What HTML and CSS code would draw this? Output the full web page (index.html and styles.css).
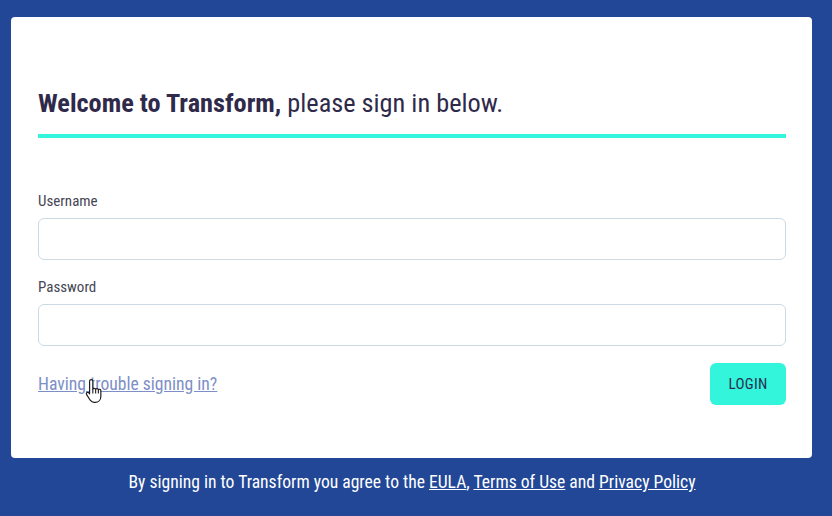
FILE: index.html
```html
<!DOCTYPE html>
<html lang="en">
<head>
<meta charset="utf-8">
<title>Sign in - Transform</title>
<link rel="stylesheet" href="styles.css">
</head>
<body>
<main class="page">
  <section class="card">
    <h1 class="title"><strong>Welcome to Transform,</strong> please sign in below.</h1>
    <form class="form">
      <label class="field">
        <span class="label">Username</span>
        <input class="input" type="text">
      </label>
      <label class="field">
        <span class="label">Password</span>
        <input class="input" type="password">
      </label>
      <div class="actions">
        <span class="link-wrap">
          <a class="trouble" href="#">Having trouble signing in?</a>
          <svg class="cursor" width="20" height="26" viewBox="0 0 18 24">
            <path d="M5.5 1.5c.9 0 1.5.6 1.5 1.5v7.2c.3-.9 2.3-.9 2.6.2.5-.9 2.2-.8 2.5.4.6-.7 2.2-.5 2.3.8v5.2c0 3.3-2.2 5.7-5.3 5.7H8.2c-1.6 0-2.7-.8-3.6-2L1.3 15.3c-.7-.9-.1-2.1 1-2 .5 0 .9.3 1.3.7L4 14.6V3c0-.9.6-1.5 1.5-1.5z" fill="#fff" stroke="#1d1d1d" stroke-width="1.1" stroke-linejoin="round"/>
            <path d="M7 10.2v4M9.6 10.4v3.8M12.1 10.8v3.4" stroke="#1d1d1d" stroke-width="1" fill="none"/>
          </svg>
        </span>
        <button class="login" type="button">LOGIN</button>
      </div>
    </form>
  </section>
  <p class="legal">By signing in to Transform you agree to the <a href="#">EULA</a>, <a href="#">Terms of Use</a> and <a href="#">Privacy Policy</a></p>
</main>
</body>
</html>
```

FILE: styles.css
```css
* { box-sizing: border-box; }
html, body { margin: 0; padding: 0; }
body {
  background: #224797;
  font-family: "Roboto Condensed", Roboto, "Liberation Sans", sans-serif;
  width: 832px;
  height: 516px;
  overflow: hidden;
}
.page {
  padding: 17px 20px 0 11px;
}
.card {
  background: #fff;
  border-radius: 4px;
  padding: 71px 26px 53px 27px;
}
.title {
  margin: 0;
  font-size: 26.3px;
  line-height: 30px;
  font-weight: 400;
  color: #2f2a4a;
  padding-bottom: 16px;
  border-bottom: 4px solid #33f5dc;
}
.title strong { font-weight: 700; }
.form {
  display: flex;
  flex-direction: column;
  padding-top: 55px;
}
.field {
  display: flex;
  flex-direction: column;
  margin-bottom: 19px;
}
.label {
  font-size: 15px;
  line-height: 17px;
  color: #454653;
  margin-bottom: 8px;
}
.input {
  height: 42px;
  border: 1px solid #cbdae3;
  border-radius: 6px;
  background: #fff;
  outline: none;
}
.actions {
  display: flex;
  justify-content: space-between;
  align-items: center;
  margin-top: -2px;
}
.link-wrap { position: relative; }
.trouble {
  font-size: 17.6px;
  color: #7d8fc7;
  text-decoration: underline;
}
.cursor {
  position: absolute;
  left: 47px;
  top: 4px;
}
.login {
  height: 42px;
  width: 76px;
  border: none;
  border-radius: 6px;
  background: #33f5dc;
  color: #27304f;
  font-family: inherit;
  font-size: 15px;
  letter-spacing: 0.3px;
}
.legal {
  margin: 14px 0 0;
  text-align: center;
  color: #fff;
  font-size: 17.6px;
  line-height: 20px;
  padding-left: 1px;
}
.legal a { color: #fff; }
```
